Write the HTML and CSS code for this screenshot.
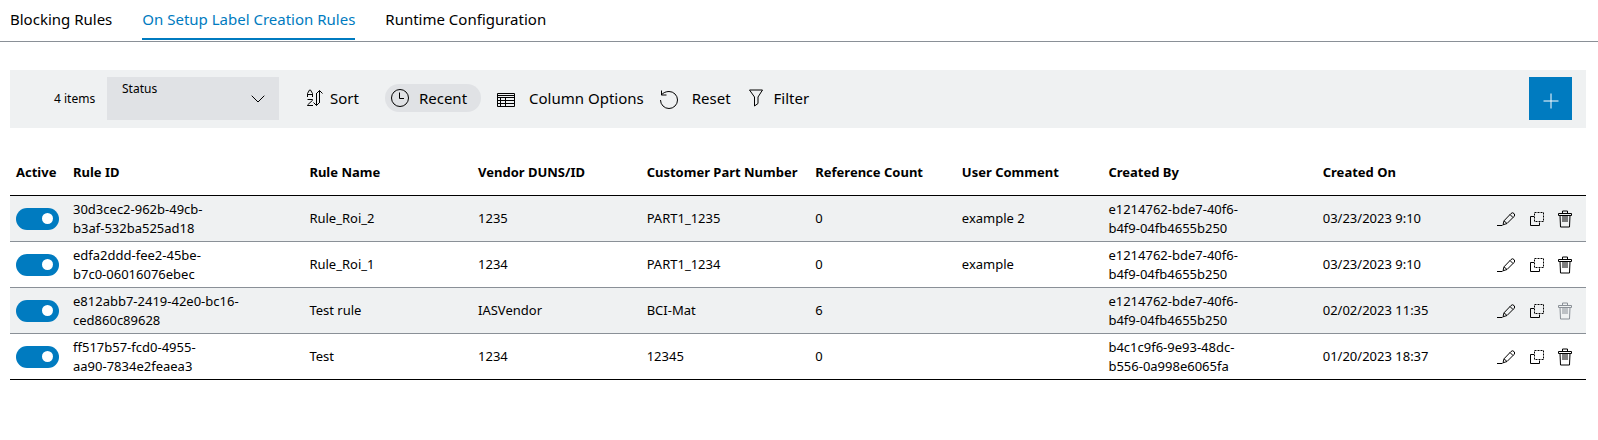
FILE: index.html
```html
<!DOCTYPE html>
<html lang="en">
<head>
  <meta charset="UTF-8">
  <title>Label Creation Rules</title>
  <link rel="stylesheet" href="styles.css">
</head>
<body>
<!-- icon set -->
<svg class="sprite" aria-hidden="true">
  <symbol id="i-chevron" viewBox="0 0 14 8"><path d="M.7.7 7 7 13.3.7"/></symbol>
  <symbol id="i-sort" viewBox="0 0 18 18"><path d="M1.5 8V4.500L3.500 1h1L6.500 4.500V8M1.500 5.500h5M1.500 10.500h5v.8L1.500 16v.5h5.500M10.500 4v12.500M7.500 13.500l3 3 3-3M13.500 14V1.500M10.500 4.500l3-3 3 3"/></symbol>
  <symbol id="i-clock" viewBox="0 0 20 20"><circle cx="10" cy="10" r="8.500"/><path d="M9.500 4.500v6h4.500"/></symbol>
  <symbol id="i-columns" viewBox="0 0 18 16"><path d="M.5 1.500h17v13H.5zM0 3.500h18M0 5.500h18M0 8.500h18M0 11.500h18M3.500 5.500v9M8.500 5.500v9"/></symbol>
  <symbol id="i-reset" viewBox="0 0 20 20"><path d="M2.500 4.800C4.300 2.700 7 1.500 10 1.500A8.500 8.500 0 1 1 1.500 10M2.500 .5v4.500h5"/></symbol>
  <symbol id="i-filter" viewBox="0 0 16 18"><path d="M1.500 1h13L10 8v6.500L6.500 17V8z"/></symbol>
  <symbol id="i-plus" viewBox="0 0 16 16"><path d="M8 .5v15M.5 8h15"/></symbol>
  <symbol id="i-edit" viewBox="0 0 20 16"><path d="M0 14.500h5.500M7 9.800 14 2.500q1.500-1.500 3 0t0 3L10 12.500 6 13.800zM13 3.500l3 3M7 9.800l3 2.700"/></symbol>
  <symbol id="i-copy" viewBox="0 0 16 16"><path d="M5 5.500H1.500v9h9V11.500"/><path stroke-dasharray="2 1" d="M5.500 1.500h9v9h-9z"/></symbol>
  <symbol id="i-trash" viewBox="0 0 16 18"><path d="M1.500 3.500h13v2h-13zM5.500 3.500V1h5v2.500M3 5.500l.5 11.500h9l.5-11.500M6 6v6M8 6v6M10 6v6"/></symbol>
</svg>

<nav class="tabs">
  <a class="tab" href="#blocking">Blocking Rules</a>
  <a class="tab active" href="#setup">On Setup Label Creation Rules</a>
  <a class="tab" href="#runtime">Runtime Configuration</a>
</nav>

<main>
  <div class="toolbar">
    <span class="count">4 items</span>
    <div class="dropdown">
      <label for="status">Status</label>
      <select id="status">
        <option value=""></option>
      </select>
      <svg class="icon chevron"><use href="#i-chevron"/></svg>
    </div>
    <button class="tool sort"><svg class="icon"><use href="#i-sort"/></svg>Sort</button>
    <button class="tool recent"><svg class="icon"><use href="#i-clock"/></svg>Recent</button>
    <button class="tool columns"><svg class="icon"><use href="#i-columns"/></svg>Column Options</button>
    <button class="tool reset"><svg class="icon"><use href="#i-reset"/></svg>Reset</button>
    <button class="tool filter"><svg class="icon"><use href="#i-filter"/></svg>Filter</button>
    <button class="add" aria-label="Add rule"><svg class="icon"><use href="#i-plus"/></svg></button>
  </div>

  <table class="rules">
    <colgroup>
      <col class="c-active"><col class="c-id"><col class="c-name"><col class="c-vendor"><col class="c-part">
      <col class="c-count"><col class="c-comment"><col class="c-by"><col class="c-on"><col class="c-actions">
    </colgroup>
    <thead>
      <tr>
        <th>Active</th>
        <th>Rule ID</th>
        <th>Rule Name</th>
        <th>Vendor DUNS/ID</th>
        <th>Customer Part Number</th>
        <th>Reference Count</th>
        <th>User Comment</th>
        <th>Created By</th>
        <th>Created On</th>
        <th></th>
      </tr>
    </thead>
    <tbody>
      <tr>
        <td><input type="checkbox" class="toggle" aria-label="Active" checked></td>
        <td>30d3cec2-962b-49cb-<br>b3af-532ba525ad18</td>
        <td>Rule_Roi_2</td>
        <td>1235</td>
        <td>PART1_1235</td>
        <td>0</td>
        <td>example 2</td>
        <td>e1214762-bde7-40f6-<br>b4f9-04fb4655b250</td>
        <td>03/23/2023 9:10</td>
        <td>
          <div class="actions">
            <button aria-label="Edit"><svg class="icon edit"><use href="#i-edit"/></svg></button>
            <button aria-label="Copy"><svg class="icon copy"><use href="#i-copy"/></svg></button>
            <button aria-label="Delete"><svg class="icon trash"><use href="#i-trash"/></svg></button>
          </div>
        </td>
      </tr>
      <tr>
        <td><input type="checkbox" class="toggle" aria-label="Active" checked></td>
        <td>edfa2ddd-fee2-45be-<br>b7c0-06016076ebec</td>
        <td>Rule_Roi_1</td>
        <td>1234</td>
        <td>PART1_1234</td>
        <td>0</td>
        <td>example</td>
        <td>e1214762-bde7-40f6-<br>b4f9-04fb4655b250</td>
        <td>03/23/2023 9:10</td>
        <td>
          <div class="actions">
            <button aria-label="Edit"><svg class="icon edit"><use href="#i-edit"/></svg></button>
            <button aria-label="Copy"><svg class="icon copy"><use href="#i-copy"/></svg></button>
            <button aria-label="Delete"><svg class="icon trash"><use href="#i-trash"/></svg></button>
          </div>
        </td>
      </tr>
      <tr>
        <td><input type="checkbox" class="toggle" aria-label="Active" checked></td>
        <td>e812abb7-2419-42e0-bc16-<br>ced860c89628</td>
        <td>Test rule</td>
        <td>IASVendor</td>
        <td>BCI-Mat</td>
        <td>6</td>
        <td></td>
        <td>e1214762-bde7-40f6-<br>b4f9-04fb4655b250</td>
        <td>02/02/2023 11:35</td>
        <td>
          <div class="actions">
            <button aria-label="Edit"><svg class="icon edit"><use href="#i-edit"/></svg></button>
            <button aria-label="Copy"><svg class="icon copy"><use href="#i-copy"/></svg></button>
            <button aria-label="Delete" disabled><svg class="icon trash"><use href="#i-trash"/></svg></button>
          </div>
        </td>
      </tr>
      <tr>
        <td><input type="checkbox" class="toggle" aria-label="Active" checked></td>
        <td>ff517b57-fcd0-4955-<br>aa90-7834e2feaea3</td>
        <td>Test</td>
        <td>1234</td>
        <td>12345</td>
        <td>0</td>
        <td></td>
        <td>b4c1c9f6-9e93-48dc-<br>b556-0a998e6065fa</td>
        <td>01/20/2023 18:37</td>
        <td>
          <div class="actions">
            <button aria-label="Edit"><svg class="icon edit"><use href="#i-edit"/></svg></button>
            <button aria-label="Copy"><svg class="icon copy"><use href="#i-copy"/></svg></button>
            <button aria-label="Delete"><svg class="icon trash"><use href="#i-trash"/></svg></button>
          </div>
        </td>
      </tr>
    </tbody>
  </table>
</main>
</body>
</html>
```
FILE: styles.css
```css
* {
  box-sizing: border-box;
}
body {
  margin: 0;
  font-family: "Noto Sans", sans-serif;
  font-size: 13px;
  line-height: 19px;
  color: #000;
  background: #fff;
}
button {
  font: inherit;
  color: inherit;
  background: none;
  border: none;
  padding: 0;
  cursor: pointer;
}
.sprite {
  display: none;
}
.icon {
  display: block;
  flex: none;
  fill: none;
  stroke: currentColor;
  stroke-width: 1;
}

/* tabs */
.tabs {
  display: flex;
  gap: 30px;
  height: 42px;
  padding: 0 10px 1px;
  border-bottom: 1px solid #8a9097;
}
.tab {
  padding-top: 9px;
  font-size: 15px;
  line-height: 20px;
  color: #000;
  text-decoration: none;
  border-bottom: 2px solid transparent;
}
.tab.active {
  color: #007bc0;
  border-bottom-color: #007bc0;
}

main {
  padding: 28px 12px 0 10px;
}

/* toolbar */
.toolbar {
  display: flex;
  align-items: center;
  height: 58px;
  padding: 0 14px 2px 44px;
  background: #eff1f2;
}
.count {
  width: 53px;
  font-size: 12px;
}
.dropdown {
  position: relative;
  width: 172px;
  height: 43px;
}
.dropdown label {
  position: absolute;
  top: 4px;
  left: 15px;
  font-size: 12px;
  line-height: 16px;
}
.dropdown select {
  width: 100%;
  height: 100%;
  padding: 16px 40px 0 15px;
  font: inherit;
  border: none;
  border-radius: 0;
  background: #e0e2e5;
  appearance: none;
}
.chevron {
  position: absolute;
  top: 18px;
  right: 14px;
  width: 14px;
  height: 8px;
  pointer-events: none;
}
.tool {
  display: flex;
  align-items: center;
  height: 28px;
  font-size: 15px;
}
.sort {
  gap: 6px;
  margin-left: 27px;
}
.sort .icon {
  width: 18px;
  height: 18px;
}
.recent {
  gap: 9px;
  margin-left: 26px;
  padding: 0 14px 0 5px;
  border-radius: 14px;
  background: #e0e2e5;
}
.recent .icon,
.reset .icon {
  width: 20px;
  height: 20px;
}
.columns {
  gap: 14px;
  margin-left: 16px;
}
.columns .icon {
  width: 18px;
  height: 16px;
}
.columns .icon,
.reset .icon {
  margin-top: 4px;
}
.reset {
  gap: 13px;
  margin-left: 15px;
}
.filter {
  gap: 10px;
  margin-left: 17px;
}
.filter .icon {
  width: 16px;
  height: 18px;
}
.add {
  display: flex;
  align-items: center;
  justify-content: center;
  width: 43px;
  height: 43px;
  margin-left: auto;
  padding-top: 6px;
  color: #fff;
  background: #007bc0;
}
.add .icon {
  width: 16px;
  height: 16px;
}

/* rules table */
.rules {
  width: 100%;
  margin-top: 22px;
  table-layout: fixed;
  border-spacing: 0;
}
.c-active { width: 57px; }
.c-id { width: 15%; }
.c-name,
.c-vendor,
.c-part { width: 10.7%; }
.c-count,
.c-comment { width: 9.3%; }
.c-by { width: 13.6%; }
.c-actions { width: 95px; }

.rules th,
.rules td {
  height: 46px;
  padding: 3px 6px;
  text-align: left;
  vertical-align: middle;
}
.rules th {
  border-bottom: 1px solid #000;
  white-space: nowrap;
}
.rules td {
  border-bottom: 1px solid #8a9097;
}
.rules tr:last-child td {
  border-bottom-color: #000;
}
.rules tbody tr:nth-child(odd) {
  background: #eff1f2;
}

.toggle {
  display: block;
  width: 43px;
  height: 22px;
  margin: 0;
  padding: 0 6px;
  appearance: none;
  border-radius: 11px;
  background: #007bc0;
}
.toggle::before {
  content: "";
  display: block;
  width: 11px;
  height: 11px;
  margin: 5px 0 0 auto;
  border-radius: 50%;
  background: #fff;
}

.actions {
  display: flex;
  gap: 12px;
}
.actions button {
  display: flex;
  align-items: center;
}
.actions button:disabled {
  color: #8a9097;
}
.edit {
  width: 20px;
  height: 16px;
}
.copy {
  width: 16px;
  height: 16px;
}
.trash {
  width: 16px;
  height: 18px;
}
```
